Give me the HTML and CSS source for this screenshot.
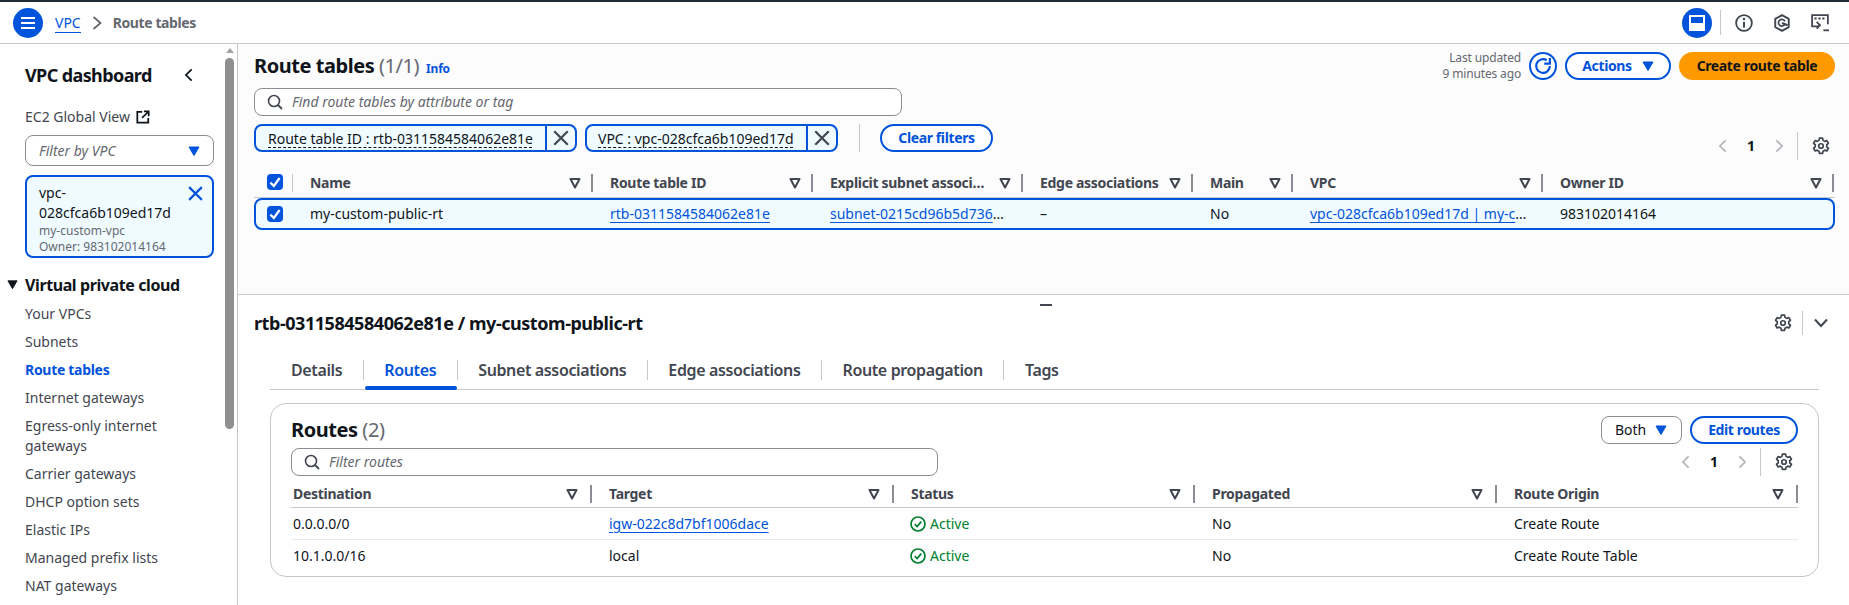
FILE: index.html
```html
<!DOCTYPE html>
<html lang="en">
<head>
  <meta charset="UTF-8" />
  <title>Route tables | VPC Console</title>
  <link rel="stylesheet" href="styles.css">
</head>
<body>
  <svg class="defs" width="0" height="0">
    <symbol id="i-filter" viewBox="0 0 12 12"><path d="M1.5 2h9L6 10.5z" fill="none" stroke="currentColor" stroke-width="2" stroke-linejoin="round"/></symbol>
    <symbol id="i-x" viewBox="0 0 16 16"><path d="M2 2l12 12M14 2L2 14" fill="none" stroke="currentColor" stroke-width="2"/></symbol>
    <symbol id="i-search" viewBox="0 0 16 16"><circle cx="7" cy="7" r="5.5" fill="none" stroke="currentColor" stroke-width="1.6"/><path d="M11 11l4 4" stroke="currentColor" stroke-width="1.8"/></symbol>
    <symbol id="i-gear" viewBox="0 0 16 16"><path d="M6.6 1h2.8l.4 2 1.5.9 1.9-.7 1.4 2.4-1.5 1.3v1.8l1.5 1.3-1.4 2.4-1.9-.7-1.5.9-.4 2H6.6l-.4-2-1.5-.9-1.9.7-1.4-2.4 1.5-1.3V6.9L1.4 5.6l1.4-2.4 1.9.7 1.5-.9z" fill="none" stroke="currentColor" stroke-width="1.5" stroke-linejoin="round"/><circle cx="8" cy="8" r="2" fill="none" stroke="currentColor" stroke-width="1.5"/></symbol>
    <symbol id="i-left" viewBox="0 0 16 16"><path d="M11 1.5L4.5 8l6.5 6.5" fill="none" stroke="currentColor" stroke-width="2"/></symbol>
    <symbol id="i-right" viewBox="0 0 16 16"><path d="M5 1.5L11.5 8 5 14.5" fill="none" stroke="currentColor" stroke-width="2"/></symbol>
    <symbol id="i-check" viewBox="0 0 14 14"><path d="M3 7.5l3 3 5-7" fill="none" stroke="#fff" stroke-width="2"/></symbol>
    <symbol id="i-ok" viewBox="0 0 16 16"><circle cx="8" cy="8" r="7" fill="none" stroke="currentColor" stroke-width="1.7"/><path d="M4.8 8.2l2.3 2.4 4.2-5" fill="none" stroke="currentColor" stroke-width="1.7"/></symbol>
    <symbol id="i-caret" viewBox="0 0 12 12"><path d="M1 2h10L6 10.500z" fill="currentColor" stroke="currentColor" stroke-linejoin="round"/></symbol>
  </svg>

  <header class="topbar">
    <button class="round-btn">
      <svg width="16" height="16" viewBox="0 0 16 16"><path d="M1 3h14M1 8h14M1 13h14" stroke="#fff" stroke-width="2"/></svg>
    </button>
    <nav class="crumbs">
      <a class="crumb-link">VPC</a>
      <svg class="crumb-sep" width="10" height="14" viewBox="0 0 10 14"><path d="M1.500 1l7 6-7 6" fill="none" stroke="currentColor" stroke-width="1.800"/></svg>
      <span class="crumb-now">Route tables</span>
    </nav>
    <div class="top-right">
      <button class="round-btn">
        <svg width="16" height="16" viewBox="0 0 16 16"><rect x="1" y="1" width="14" height="14" fill="none" stroke="#fff" stroke-width="2"/><rect x="1" y="8" width="14" height="7" fill="#fff"/></svg>
      </button>
      <span class="top-sep"></span>
      <svg class="top-icon" width="18" height="18" viewBox="0 0 16 16"><circle cx="8" cy="8" r="7" fill="none" stroke="currentColor" stroke-width="1.6"/><path d="M8 7v5" stroke="currentColor" stroke-width="1.8"/><circle cx="8" cy="4.500" r="1.100" fill="currentColor"/></svg>
      <svg class="top-icon" width="18" height="18" viewBox="0 0 16 16"><path d="M8 1l6 3.400v7.200L8 15l-6-3.400V4.400z" fill="none" stroke="currentColor" stroke-width="1.700" stroke-linejoin="round"/><path d="M8 8l5 2" stroke="currentColor" stroke-width="1.700"/><path d="M10.600 9A3 3 0 1 1 10.600 6.600" fill="none" stroke="currentColor" stroke-width="1.500"/></svg>
      <svg class="top-icon" width="18" height="18" viewBox="0 0 16 16"><path d="M7 11H1V1h14v8" fill="none" stroke="currentColor" stroke-width="1.600"/><path d="M3 4h2M6.500 4h2M10 4h2" stroke="currentColor" stroke-width="1.600"/><path d="M5 7l3 3-3 3" fill="none" stroke="currentColor" stroke-width="1.600"/><path d="M11 14.500h5" stroke="currentColor" stroke-width="1.600"/></svg>
    </div>
  </header>

  <div class="layout">
    <aside class="sidebar">
      <div class="side-inner">
        <div class="side-head">
          <h2>VPC dashboard</h2>
          <svg width="14" height="16"><use href="#i-left"/></svg>
        </div>
        <div class="side-ec2">EC2 Global View
          <svg width="14" height="14" viewBox="0 0 16 16"><path d="M7 2H1.500v12.500H14V9" fill="none" stroke="currentColor" stroke-width="2"/><path d="M7 9l7-7M9 1.500h5.500V7" fill="none" stroke="currentColor" stroke-width="2"/></svg>
        </div>
        <div class="side-select"><span>Filter by VPC</span><svg width="12" height="12"><use href="#i-caret"/></svg></div>
        <div class="side-token">
          <div class="side-token-text">
            <div class="token-main">vpc-<br>028cfca6b109ed17d</div>
            <div class="token-sub">my-custom-vpc</div>
            <div class="token-sub">Owner: 983102014164</div>
          </div>
          <svg class="token-x" width="17" height="17"><use href="#i-x"/></svg>
        </div>
        <div class="side-group">
          <svg width="11" height="11"><use href="#i-caret"/></svg>
          <span>Virtual private cloud</span>
        </div>
        <ul class="side-nav">
          <li>Your VPCs</li>
          <li>Subnets</li>
          <li class="active">Route tables</li>
          <li>Internet gateways</li>
          <li>Egress-only internet gateways</li>
          <li>Carrier gateways</li>
          <li>DHCP option sets</li>
          <li>Elastic IPs</li>
          <li>Managed prefix lists</li>
          <li>NAT gateways</li>
        </ul>
      </div>
      <div class="scrollbar"><span class="scroll-arrow"></span><span class="scroll-thumb"></span></div>
    </aside>

    <main class="main">
      <section class="top-panel">
        <div class="panel-head">
          <h1>Route tables <span class="count">(1/1)</span></h1>
          <a class="info">Info</a>
          <div class="updated">Last updated<br>9 minutes ago</div>
          <button class="btn refresh">
            <svg width="20" height="20" viewBox="0 0 16 16"><path d="M13.500 8A5.500 5.500 0 1 1 11 3.400" fill="none" stroke="currentColor" stroke-width="1.800"/><path d="M13.500 1.500V6H9" fill="none" stroke="currentColor" stroke-width="1.800"/></svg>
          </button>
          <button class="btn actions">Actions <svg width="12" height="12"><use href="#i-caret"/></svg></button>
          <button class="btn primary">Create route table</button>
        </div>
        <div class="search wide">
          <svg width="16" height="16"><use href="#i-search"/></svg>
          <span>Find route tables by attribute or tag</span>
        </div>
        <div class="token-row">
          <div class="token t1"><span class="token-label"><u>Route table ID : rtb-0311584584062e81e</u></span><span class="token-close"><svg width="18" height="18"><use href="#i-x"/></svg></span></div>
          <div class="token t2"><span class="token-label"><u>VPC : vpc-028cfca6b109ed17d</u></span><span class="token-close"><svg width="18" height="18"><use href="#i-x"/></svg></span></div>
          <span class="token-sep"></span>
          <button class="btn clear">Clear filters</button>
          <div class="pager pager-top">
            <svg class="off" width="14" height="16"><use href="#i-left"/></svg>
            <b>1</b>
            <svg class="off" width="14" height="16"><use href="#i-right"/></svg>
            <span class="pager-sep"></span>
            <svg class="gear" width="18" height="18"><use href="#i-gear"/></svg>
          </div>
        </div>
        <div class="rt-grid rt-head">
          <div class="th-check"><span class="check"><svg width="16" height="16"><use href="#i-check"/></svg></span><i class="col-sep"></i></div>
          <div class="th">Name<svg width="12" height="12"><use href="#i-filter"/></svg><i class="col-sep"></i></div>
          <div class="th">Route table ID<svg width="12" height="12"><use href="#i-filter"/></svg><i class="col-sep"></i></div>
          <div class="th">Explicit subnet associ…<svg width="12" height="12"><use href="#i-filter"/></svg><i class="col-sep"></i></div>
          <div class="th">Edge associations<svg width="12" height="12"><use href="#i-filter"/></svg><i class="col-sep"></i></div>
          <div class="th">Main<svg width="12" height="12"><use href="#i-filter"/></svg><i class="col-sep"></i></div>
          <div class="th">VPC<svg width="12" height="12"><use href="#i-filter"/></svg><i class="col-sep"></i></div>
          <div class="th">Owner ID<svg width="12" height="12"><use href="#i-filter"/></svg><i class="col-sep"></i></div>
        </div>
        <div class="rt-grid rt-row">
          <div class="td-check"><span class="check"><svg width="16" height="16"><use href="#i-check"/></svg></span></div>
          <div class="td">my-custom-public-rt</div>
          <div class="td"><a class="link">rtb-0311584584062e81e</a></div>
          <div class="td"><a class="link">subnet-0215cd96b5d736</a>…</div>
          <div class="td">–</div>
          <div class="td">No</div>
          <div class="td"><a class="link">vpc-028cfca6b109ed17d | my-c</a>…</div>
          <div class="td">983102014164</div>
        </div>
      </section>

      <section class="bottom-panel">
        <span class="drag-handle"></span>
        <div class="detail-head">
          <h2>rtb-0311584584062e81e / my-custom-public-rt</h2>
          <svg class="gear" width="18" height="18"><use href="#i-gear"/></svg>
          <span class="detail-sep"></span>
          <svg class="chev" width="16" height="10" viewBox="0 0 16 10"><path d="M2 1.500l6 6.500 6-6.500" fill="none" stroke="currentColor" stroke-width="2"/></svg>
        </div>
        <div class="tabs">
          <div class="tab">Details</div>
          <div class="tab active">Routes</div>
          <div class="tab">Subnet associations</div>
          <div class="tab">Edge associations</div>
          <div class="tab">Route propagation</div>
          <div class="tab">Tags</div>
        </div>
        <div class="card">
          <div class="card-head">
            <h3>Routes <span class="count">(2)</span></h3>
            <div class="both"><span>Both</span><svg width="12" height="12"><use href="#i-caret"/></svg></div>
            <button class="btn edit">Edit routes</button>
          </div>
          <div class="card-tools">
            <div class="search narrow">
              <svg width="16" height="16"><use href="#i-search"/></svg>
              <span>Filter routes</span>
            </div>
            <div class="pager pager-card">
              <svg class="off" width="14" height="16"><use href="#i-left"/></svg>
              <b>1</b>
              <svg class="off" width="14" height="16"><use href="#i-right"/></svg>
              <span class="pager-sep"></span>
              <svg class="gear" width="18" height="18"><use href="#i-gear"/></svg>
            </div>
          </div>
          <div class="routes-grid routes-head">
            <div class="th">Destination<svg width="12" height="12"><use href="#i-filter"/></svg><i class="col-sep"></i></div>
            <div class="th">Target<svg width="12" height="12"><use href="#i-filter"/></svg><i class="col-sep"></i></div>
            <div class="th">Status<svg width="12" height="12"><use href="#i-filter"/></svg><i class="col-sep"></i></div>
            <div class="th">Propagated<svg width="12" height="12"><use href="#i-filter"/></svg><i class="col-sep"></i></div>
            <div class="th">Route Origin<svg width="12" height="12"><use href="#i-filter"/></svg><i class="col-sep"></i></div>
          </div>
          <div class="routes-grid route-row first">
            <div class="td">0.0.0.0/0</div>
            <div class="td"><a class="link">igw-022c8d7bf1006dace</a></div>
            <div class="td status"><svg width="16" height="16"><use href="#i-ok"/></svg>Active</div>
            <div class="td">No</div>
            <div class="td">Create Route</div>
          </div>
          <div class="routes-grid route-row">
            <div class="td">10.1.0.0/16</div>
            <div class="td">local</div>
            <div class="td status"><svg width="16" height="16"><use href="#i-ok"/></svg>Active</div>
            <div class="td">No</div>
            <div class="td">Create Route Table</div>
          </div>
        </div>
      </section>
    </main>
  </div>
</body>
</html>
```

FILE: styles.css
```css
* {
  box-sizing: border-box;
}
html {
  height: 605px;
  overflow: hidden;
}
body {
  margin: 0;
  height: 605px;
  overflow: hidden;
  display: flex;
  flex-direction: column;
  font-family: "Noto Sans", sans-serif;
  font-size: 14px;
  line-height: 20px;
  color: #0f141a;
  background-color: #fff;
  border-top: 2px solid #232b37;
}
h1, h2, h3, ul {
  margin: 0;
  padding: 0;
}
h1, h2, h3 {
  letter-spacing: -0.45px;
}
button {
  font-family: inherit;
}
.defs {
  position: absolute;
}

/* top bar */
.topbar {
  height: 42px;
  flex: none;
  display: flex;
  align-items: center;
  padding: 0 14px 0 13px;
  border-bottom: 1px solid #c6c6cd;
}
.round-btn {
  width: 30px;
  height: 30px;
  border: none;
  padding: 0;
  border-radius: 50%;
  background-color: #0053db;
  display: flex;
  align-items: center;
  justify-content: center;
}
.crumbs {
  display: flex;
  align-items: center;
  margin-left: 12px;
}
.crumb-link {
  color: #0053db;
  border-bottom: 1px solid #0053db;
  line-height: 19px;
}
.crumb-sep {
  margin: 0 11px;
  color: #656871;
}
.crumb-now {
  color: #656871;
  font-weight: 700;
  letter-spacing: -0.4px;
}
.top-right {
  margin-left: auto;
  display: flex;
  align-items: center;
}
.top-sep {
  width: 1px;
  height: 25px;
  background-color: #c6c6cd;
  margin: 0 14px 0 8px;
}
.top-icon {
  color: #424650;
  margin-right: 20px;
}
.top-icon:last-child {
  margin-right: 6px;
}

.layout {
  flex: 1;
  display: flex;
  min-height: 0;
}

/* side navigation */
.sidebar {
  width: 238px;
  flex: none;
  display: flex;
  border-right: 1px solid #c6c6cd;
  overflow: hidden;
}
.side-inner {
  width: 225px;
  flex: none;
  padding: 19px 0 0 25px;
  color: #424650;
}
.side-head {
  display: flex;
  align-items: center;
  justify-content: space-between;
  width: 171px;
  height: 24px;
  color: #0f141a;
}
.side-head h2 {
  font-size: 18px;
  line-height: 24px;
  letter-spacing: -0.6px;
}
.side-ec2 {
  margin-top: 20px;
  display: flex;
  align-items: center;
  gap: 6px;
  width: 189px;
}
.side-ec2 svg {
  color: #0f141a;
}
.side-select {
  margin-top: 8px;
  width: 189px;
  height: 31px;
  border: 1px solid #8c8c94;
  border-radius: 8px;
  display: flex;
  align-items: center;
  justify-content: space-between;
  padding: 0 13px 0 13px;
  font-style: italic;
  color: #656871;
}
.side-select svg {
  color: #0053db;
}
.side-token {
  margin-top: 9px;
  width: 189px;
  height: 83px;
  border: 2px solid #0053db;
  border-radius: 8px;
  background-color: #f0fbff;
  display: flex;
  justify-content: space-between;
  padding: 6px 8px 0 12px;
}
.token-main {
  color: #0f141a;
}
.token-sub {
  font-size: 12px;
  line-height: 16px;
  color: #656871;
}
.token-x {
  color: #0053db;
  margin-top: 2px;
}
.side-group {
  position: relative;
  margin-top: 15px;
  height: 24px;
  display: flex;
  align-items: center;
  color: #0f141a;
  font-size: 16px;
  font-weight: 700;
  letter-spacing: -0.4px;
}
.side-group svg {
  position: absolute;
  left: -18px;
  top: 6px;
}
.side-nav {
  list-style: none;
  margin-top: 7px;
  width: 185px;
}
.side-nav li {
  margin-bottom: 8px;
}
.side-nav .active {
  color: #0053db;
  font-weight: 700;
  letter-spacing: -0.3px;
}
.scrollbar {
  width: 9px;
  padding-top: 4px;
  display: flex;
  flex-direction: column;
  align-items: center;
}
.scroll-arrow {
  border-left: 4px solid transparent;
  border-right: 4px solid transparent;
  border-bottom: 5px solid #a3a3a3;
  margin-bottom: 5px;
}
.scroll-thumb {
  width: 9px;
  height: 371px;
  border-radius: 5px;
  background-color: #8f8f8f;
}

/* main */
.main {
  flex: 1;
  min-width: 0;
  display: flex;
  flex-direction: column;
}
.top-panel {
  height: 251px;
  flex: none;
  padding: 8px 14px 0 16px;
  background-color: #fcfcfc;
  border-bottom: 1px solid #c6c6cd;
}
.panel-head {
  height: 28px;
  display: flex;
  align-items: center;
}
.panel-head h1 {
  font-size: 20px;
  line-height: 28px;
}
.count {
  font-weight: 400;
  color: #656871;
}
.info {
  font-size: 12px;
  font-weight: 700;
  color: #0053db;
  margin: 5px 0 0 7px;
  letter-spacing: -0.2px;
}
.updated {
  margin-left: auto;
  text-align: right;
  font-size: 12px;
  line-height: 16px;
  letter-spacing: -0.15px;
  color: #656871;
}
.btn {
  height: 28px;
  padding: 0 16px;
  border: 2px solid #0053db;
  border-radius: 20px;
  background-color: #fff;
  color: #0053db;
  font-size: 14px;
  font-weight: 700;
  line-height: 20px;
  letter-spacing: -0.38px;
  white-space: nowrap;
}
.refresh {
  width: 28px;
  padding: 0;
  margin-left: 8px;
  display: flex;
  align-items: center;
  justify-content: center;
}
.actions {
  width: 106px;
  margin-left: 8px;
  padding: 0;
  display: flex;
  align-items: center;
  justify-content: center;
  gap: 10px;
}
.primary {
  width: 156px;
  margin-left: 8px;
  padding: 0;
  background-color: #ff9900;
  border-color: #ff9900;
  color: #0f141a;
}
.search {
  height: 28px;
  display: flex;
  align-items: center;
  gap: 9px;
  padding-left: 12px;
  border: 1px solid #8c8c94;
  border-radius: 8px;
  background-color: #fff;
  font-style: italic;
  color: #656871;
}
.search svg {
  color: #424650;
}
.wide {
  width: 648px;
  margin-top: 8px;
}
.token-row {
  margin-top: 8px;
  height: 36px;
  display: flex;
  align-items: flex-start;
}
.token {
  height: 28px;
  display: flex;
  border: 2px solid #0053db;
  border-radius: 8px;
  background-color: #f0fbff;
}
.t1 {
  width: 323px;
}
.t2 {
  width: 253px;
  margin-left: 8px;
}
.t2 .token-label {
  padding-left: 11px;
}
.token-label {
  flex: 1;
  padding-left: 12px;
  white-space: nowrap;
  line-height: 25px;
}
.token-label u {
  text-decoration: underline dashed 1px;
  text-underline-offset: 3px;
}
.token-close {
  width: 30px;
  flex: none;
  display: flex;
  align-items: center;
  justify-content: center;
  border-left: 2px solid #0053db;
  color: #424650;
}
.token-sep {
  width: 1px;
  height: 28px;
  margin: 0 20px 0 21px;
  background-color: #c6c6cd;
}
.clear {
  width: 113px;
  padding: 0;
}
.pager {
  display: flex;
  align-items: center;
  height: 28px;
  margin-left: auto;
}
.pager-top {
  margin-top: 8px;
  padding-right: 5px;
}
.pager-card {
  padding-right: 5px;
}
.pager b {
  width: 42px;
  text-align: center;
  color: #0f141a;
}
.off {
  color: #b4b4bb;
}
.pager-sep {
  width: 1px;
  height: 28px;
  margin: 0 14px 0 11px;
  background-color: #c6c6cd;
}
.gear {
  color: #424650;
}

/* route tables table */
.rt-grid {
  display: grid;
  grid-template-columns: 39px 300px 220px 210px 170px 100px 250px 291px;
}
.rt-head {
  margin-top: 14px;
  height: 24px;
  border-bottom: 1px solid #c6c6cd;
}
.rt-head .th {
  padding-right: 12px;
}
.th-check, .td-check {
  display: flex;
  align-items: flex-start;
  padding-left: 13px;
}
.th-check {
  position: relative;
}
.check {
  width: 16px;
  height: 16px;
  display: block;
  border-radius: 4px;
  background-color: #0053db;
}
.check svg {
  display: block;
}
.th {
  position: relative;
  height: 23px;
  padding: 0 14px 0 17px;
  display: flex;
  justify-content: space-between;
  font-weight: 700;
  color: #424650;
  white-space: nowrap;
  line-height: 18px;
  letter-spacing: -0.3px;
}
.th svg {
  margin: 3px 0 0 0;
  color: #424650;
}
.col-sep {
  position: absolute;
  right: 0;
  top: 0;
  width: 2px;
  height: 18px;
  background-color: #8c8c94;
}
.th-check .col-sep {
  width: 1px;
  background-color: #c6c6cd;
}
.rt-row {
  height: 32px;
  grid-template-columns: 37px 300px 220px 210px 170px 100px 250px 289px;
  border: 2px solid #0053db;
  border-radius: 8px;
  background-color: #f0fbff;
  align-items: center;
}
.td-check {
  padding-left: 11px;
}
.td {
  padding-left: 17px;
  white-space: nowrap;
}
.link {
  color: #0053db;
  text-decoration: underline;
  text-underline-offset: 3px;
}

/* details */
.bottom-panel {
  position: relative;
  flex: 1;
  padding: 16px 14px 0 16px;
}
.drag-handle {
  position: absolute;
  left: 802px;
  top: 9px;
  width: 12px;
  height: 2px;
  background-color: #424650;
}
.detail-head {
  height: 24px;
  display: flex;
  align-items: center;
}
.detail-head h2 {
  font-size: 18px;
  line-height: 24px;
  flex: 1;
  font-weight: 700;
}
.detail-sep {
  width: 1px;
  height: 24px;
  margin: 0 10px;
  background-color: #c6c6cd;
}
.chev {
  color: #424650;
  margin-right: 6px;
}
.tabs {
  margin: 20px 0 0 16px;
  width: 1549px;
  height: 35px;
  display: flex;
  border-bottom: 1px solid #c6c6cd;
  padding-top: 5px;
}
.tab {
  position: relative;
  height: 20px;
  padding: 0 20.5px;
  font-size: 16px;
  font-weight: 600;
  color: #424650;
  white-space: nowrap;
  border-right: 1px solid #c6c6cd;
  line-height: 20px;
  letter-spacing: -0.37px;
}
.tab:first-child {
  padding-left: 21px;
}
.tab:last-child {
  border-right: none;
}
.tab.active {
  color: #0053db;
}
.tab.active::after {
  content: "";
  position: absolute;
  left: 1px;
  right: 0;
  top: 26px;
  height: 4px;
  border-radius: 2px;
  background-color: #0053db;
}
.card {
  margin: 13px 0 0 16px;
  width: 1549px;
  height: 174px;
  border: 1px solid #c6c6cd;
  border-radius: 16px;
  background-color: #fff;
  padding: 12px 20px 0 20px;
}
.card-head {
  height: 28px;
  display: flex;
  align-items: center;
}
.card-head h3 {
  flex: 1;
  font-size: 20px;
  line-height: 28px;
}
.both {
  width: 81px;
  height: 28px;
  display: flex;
  align-items: center;
  justify-content: space-between;
  padding: 0 14px 0 13px;
  border: 1px solid #8c8c94;
  border-radius: 8px;
}
.both svg {
  color: #0053db;
}
.edit {
  width: 108px;
  padding: 0;
  margin-left: 8px;
}
.card-tools {
  margin-top: 4px;
  height: 28px;
  display: flex;
}
.narrow {
  width: 647px;
}
.routes-grid {
  display: grid;
  grid-template-columns: 301px 302px 301px 302px 301px;
}
.routes-head {
  margin-top: 8px;
  height: 24px;
  padding-top: 1px;
  border-bottom: 1px solid #c6c6cd;
}
.routes-head .th {
  padding-left: 2px;
}
.routes-head .th:not(:first-child) {
  padding-left: 17px;
}
.route-row {
  height: 32px;
  align-items: center;
}
.route-row.first {
  border-bottom: 1px solid #e9ebed;
}
.route-row .td:first-child {
  padding-left: 2px;
}
.status {
  display: flex;
  align-items: center;
  gap: 4px;
  margin-left: -1px;
  color: #00802f;
}
```
